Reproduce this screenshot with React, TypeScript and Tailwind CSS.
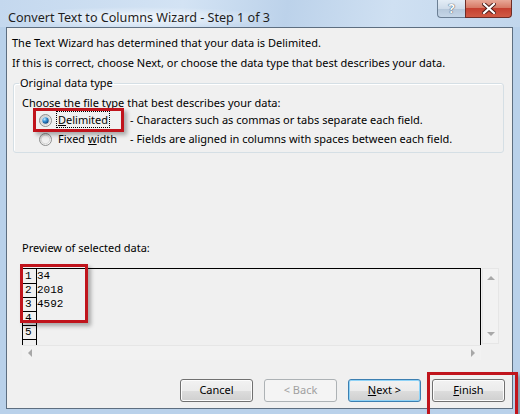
import React from "react";

const FONT = { fontFamily: '"Noto Sans", "Open Sans", sans-serif' };
const MONO = { fontFamily: '"Liberation Mono", "Courier New", monospace' };

function Radio({ checked }: { checked?: boolean }) {
  return (
    <svg width="13" height="13" viewBox="0 0 13 13" className="shrink-0">
      <defs>
        <linearGradient id={checked ? "rbo1" : "rbo2"} x1="0" y1="0" x2="1" y2="1">
          <stop offset="0" stopColor="#c9c9c9" />
          <stop offset="1" stopColor="#ffffff" />
        </linearGradient>
        <radialGradient id="rdot" cx="0.35" cy="0.3" r="0.75">
          <stop offset="0" stopColor="#c8ecff" />
          <stop offset="0.45" stopColor="#3a94d8" />
          <stop offset="1" stopColor="#0b3f78" />
        </radialGradient>
      </defs>
      <circle cx="6.5" cy="6.5" r="6" fill={`url(#${checked ? "rbo1" : "rbo2"})`} stroke="#8e8f8f" />
      <circle cx="6.5" cy="6.5" r="4.2" fill="#f0f0f0" stroke="#c8c8c8" strokeWidth="0.6" />
      {checked && <circle cx="6.5" cy="6.5" r="3.2" fill="url(#rdot)" />}
    </svg>
  );
}

function Btn({
  children,
  variant,
}: {
  children: React.ReactNode;
  variant?: "default" | "disabled";
}) {
  if (variant === "disabled") {
    return (
      <div className="flex h-[23px] w-[73px] items-center justify-center rounded-[3px] border border-[#adb2b5] bg-[#f4f4f4] text-[11px] text-[#a0a0a0]">
        {children}
      </div>
    );
  }
  if (variant === "default") {
    return (
      <div className="flex h-[23px] w-[73px] items-center justify-center rounded-[3px] border border-[#3c7fb1] bg-[linear-gradient(#f2f2f2_0%,#ebebeb_50%,#dddddd_51%,#cfcfcf_100%)] text-[11px] text-black shadow-[inset_0_0_0_1px_#8fd3f7]">
        {children}
      </div>
    );
  }
  return (
    <div className="flex h-[23px] w-[73px] items-center justify-center rounded-[3px] border border-[#707070] bg-[linear-gradient(#f2f2f2_0%,#ebebeb_50%,#dddddd_51%,#cfcfcf_100%)] text-[11px] text-black shadow-[inset_0_0_0_1px_#fcfcfc]">
      {children}
    </div>
  );
}

function Tri({ dir }: { dir: "up" | "down" | "left" | "right" }) {
  const pts =
    dir === "up"
      ? "0,4 4,0 8,4"
      : dir === "down"
      ? "0,0 8,0 4,4"
      : dir === "left"
      ? "4,0 4,8 0,4"
      : "0,0 0,8 4,4";
  const w = dir === "up" || dir === "down" ? 8 : 4;
  const h = dir === "up" || dir === "down" ? 4 : 8;
  return (
    <svg width={w} height={h} viewBox={`0 0 ${w} ${h}`}>
      <polygon points={pts} fill="#a8a8a8" />
    </svg>
  );
}

const rows = ["34", "2018", "4592", "", ""];

export default function App() {
  return (
    <div
      className="relative flex h-[414px] w-[520px] flex-col overflow-hidden bg-[#b9d1ea] text-black"
      style={FONT}
    >
      {/* Title bar */}
      <div className="relative flex h-[27px] shrink-0 justify-between bg-[linear-gradient(100deg,#c4d8ee_0%,#d3e3f4_35%,#bcd2ea_55%,#cfe0f2_75%,#c1d6ec_100%)]">
        <div className="pl-[8px] pt-[4px]">
          <span className="-ml-[6px] rounded-full bg-[radial-gradient(closest-side,rgba(255,255,255,0.75),rgba(255,255,255,0))] px-[6px] py-[2px] text-[12.6px] leading-[16px] text-[#1e1e1e]">
            Convert Text to Columns Wizard - Step 1 of 3
          </span>
        </div>
        <div className="mr-[8px] flex h-[18px]">
          <div className="flex h-[18px] w-[28px] items-center justify-center rounded-bl-[4px] border border-r-0 border-t-0 border-[#6b7f94] bg-[linear-gradient(#e4edf6_0%,#cfdcea_50%,#b5c7da_51%,#c5d6e7_100%)] text-[13px] font-bold leading-none text-white [text-shadow:0_0_1px_#34495e,0_0_1px_#34495e]">
            ?
          </div>
          <div className="flex h-[18px] w-[47px] items-center justify-center rounded-br-[4px] border border-t-0 border-[#6e2d27] bg-[linear-gradient(#e8a898_0%,#d77a66_45%,#c54030_50%,#d05a44_100%)]">
            <svg width="14" height="11" viewBox="0 0 14 11">
              <path d="M2 1 L12 10 M12 1 L2 10" stroke="#4a1a16" strokeWidth="4" strokeLinecap="square" />
              <path d="M2 1 L12 10 M12 1 L2 10" stroke="#ffffff" strokeWidth="2.2" strokeLinecap="square" />
            </svg>
          </div>
        </div>
      </div>

      {/* Client area */}
      <div className="mb-[5px] ml-[6px] mr-[7px] flex flex-1 flex-col border border-[#5d6e80] bg-[#f0f0f0] text-[11px]">
        <div className="mt-[7px] pl-[5px] leading-[16px]">
          The Text Wizard has determined that your data is Delimited.
        </div>
        <div className="mt-[4px] pl-[5px] leading-[16px]">
          If this is correct, choose Next, or choose the data type that best describes your data.
        </div>

        <fieldset className="ml-[6px] mr-[8px] mt-[4px] rounded-[3px] border border-[#d5dfe5] pb-[3px] shadow-[inset_1px_1px_0_#ffffff]">
          <legend className="ml-[5px] px-[1px] leading-[16px]">Original data type</legend>
          <div className="pl-[8px] pt-[4px]">
            <div className="h-[16px] leading-[16px]">
              Choose the file type that best describes your data:
            </div>
            <div className="flex h-[19px] items-center pl-[17px]">
              <Radio checked />
              <span className="ml-[4px] w-[74px]">
                <span className="border border-dotted border-black px-[1px] leading-[14px]">
                  <span className="underline">D</span>elimited
                </span>
              </span>
              <span>- Characters such as commas or tabs separate each field.</span>
            </div>
            <div className="flex h-[19px] items-center pl-[17px]">
              <Radio />
              <span className="ml-[6px] w-[72px]">
                Fixed <span className="underline">w</span>idth
              </span>
              <span>- Fields are aligned in columns with spaces between each field.</span>
            </div>
          </div>
        </fieldset>

        <div className="mt-[87px] pl-[15px] leading-[16px]">Preview of selected data:</div>

        <div className="ml-[15px] mt-[12px] flex">
          <div className="flex w-[459px] flex-col">
            <div className="flex h-[77px] border-r border-t border-black">
              <div className="flex w-[15px] flex-col border-l border-r border-black pt-[1px]">
                {rows.map((_, i) => (
                  <div
                    key={i}
                    className="h-[14px] border-b border-black pl-[2px] text-[11px] leading-[13px]"
                    style={MONO}
                  >
                    {i + 1}
                  </div>
                ))}
              </div>
              <div className="flex flex-col pt-[1px]">
                {rows.map((r, i) => (
                  <div key={i} className="h-[14px] text-[11px] leading-[13px]" style={MONO}>
                    {r}
                  </div>
                ))}
              </div>
            </div>
            <div className="flex h-[15px] items-center justify-between border-t border-[#e6e6e6] bg-[#f2f2f2] px-[6px]">
              <Tri dir="left" />
              <Tri dir="right" />
            </div>
          </div>
          <div className="ml-[1px] flex h-[76px] w-[17px] flex-col items-center justify-between border border-[#e6e6e6] bg-[#f2f2f2] py-[7px]">
            <Tri dir="up" />
            <Tri dir="down" />
          </div>
        </div>

        <div className="mr-[7px] mt-[19px] flex justify-end gap-[11px]">
          <Btn>Cancel</Btn>
          <Btn variant="disabled">&lt; Back</Btn>
          <Btn variant="default">
            <span className="underline">N</span>ext &gt;
          </Btn>
          <Btn>
            <span className="underline">F</span>inish
          </Btn>
        </div>
      </div>

      {/* Red highlight overlays */}
      <div className="pointer-events-none absolute left-[33px] top-[108px] h-[24px] w-[91px] border-[3px] border-[#c0141c] shadow-[3px_3px_4px_rgba(0,0,0,0.3)]" />
      <div className="pointer-events-none absolute left-[20px] top-[264px] h-[59px] w-[68px] border-[3px] border-[#c0141c] shadow-[3px_3px_4px_rgba(0,0,0,0.3)]" />
      <div className="pointer-events-none absolute left-[427px] top-[372px] h-[50px] w-[91px] border-[3px] border-[#c0141c] shadow-[3px_3px_4px_rgba(0,0,0,0.3)]" />
    </div>
  );
}
